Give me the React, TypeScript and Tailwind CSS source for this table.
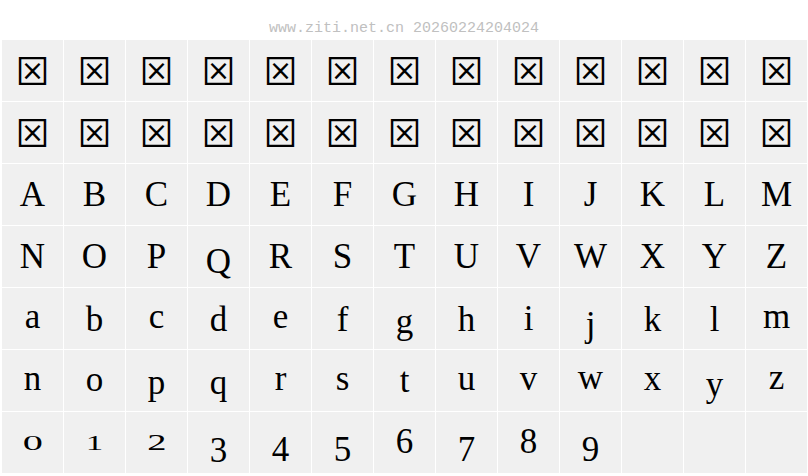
import React from "react";

// glyph sheet: 13 columns, 7 rows
const BOX = "⊠";
const ROWS: string[][] = [
  Array(13).fill(BOX),
  Array(13).fill(BOX),
  "ABCDEFGHIJKLM".split(""),
  "NOPQRSTUVWXYZ".split(""),
  "abcdefghijklm".split(""),
  "nopqrstuvwxyz".split(""),
  [..."0123456789".split(""), "", "", ""],
];

// per-glyph nudges so the sheet reads like the specimen (old-style figures etc.)
const NUDGE: Record<string, string> = {
  Q: "translate-y-[5px]",
  a: "-translate-y-[2px]",
  b: "translate-y-[1px]",
  c: "-translate-y-[2px]",
  d: "translate-y-[1px]",
  e: "-translate-y-[2px]",
  f: "translate-y-[1px]",
  g: "translate-y-[3px]",
  h: "translate-y-[1px]",
  i: "translate-y-[0px]",
  j: "translate-y-[6px]",
  k: "translate-y-[1px]",
  l: "translate-y-[1px]",
  m: "-translate-y-[2px]",
  n: "-translate-y-[2px]",
  o: "-translate-y-[1px]",
  p: "translate-y-[2px]",
  q: "translate-y-[2px]",
  r: "-translate-y-[2px]",
  s: "-translate-y-[2px]",
  t: "translate-y-[0px]",
  u: "-translate-y-[2px]",
  v: "-translate-y-[2px]",
  w: "-translate-y-[3px]",
  x: "-translate-y-[2px]",
  y: "translate-y-[4px]",
  z: "-translate-y-[3px]",
  "0": "scale-y-[0.62] scale-x-[1.15]",
  "1": "scale-y-[0.62]",
  "2": "scale-y-[0.64] scale-x-[1.1]",
  "3": "translate-y-[8px]",
  "4": "translate-y-[7px]",
  "5": "translate-y-[7px]",
  "6": "-translate-y-[1px]",
  "7": "translate-y-[7px]",
  "8": "-translate-y-[1px]",
  "9": "translate-y-[7px]",
};

function Cell({ ch }: { ch: string }) {
  const isBox = ch === BOX;
  return (
    <div className="flex h-[61px] items-center justify-center bg-[#f0f0f0] text-black">
      {ch && (
        <span
          className={
            isBox
              ? "font-['Noto_Sans_CJK_SC','DejaVu_Sans',sans-serif] text-[34px] font-normal leading-none -translate-y-[1px]"
              : `font-['Liberation_Serif',serif] text-[35px] leading-none ${NUDGE[ch] ?? ""}`
          }
        >
          {ch}
        </span>
      )}
    </div>
  );
}

export default function App() {
  return (
    <div className="h-[476px] w-[808px] overflow-hidden bg-white">
      <div className="h-[40px] pt-[20px] text-center font-['Liberation_Mono',monospace] text-[15px] leading-[17px] text-[#c0c0c0]">
        www.ziti.net.cn 20260224204024
      </div>
      <div className="ml-[2px] grid grid-cols-[repeat(13,61px)] gap-px">
        {ROWS.flatMap((row, r) => row.map((ch, c) => <Cell key={`${r}-${c}`} ch={ch} />))}
      </div>
    </div>
  );
}
